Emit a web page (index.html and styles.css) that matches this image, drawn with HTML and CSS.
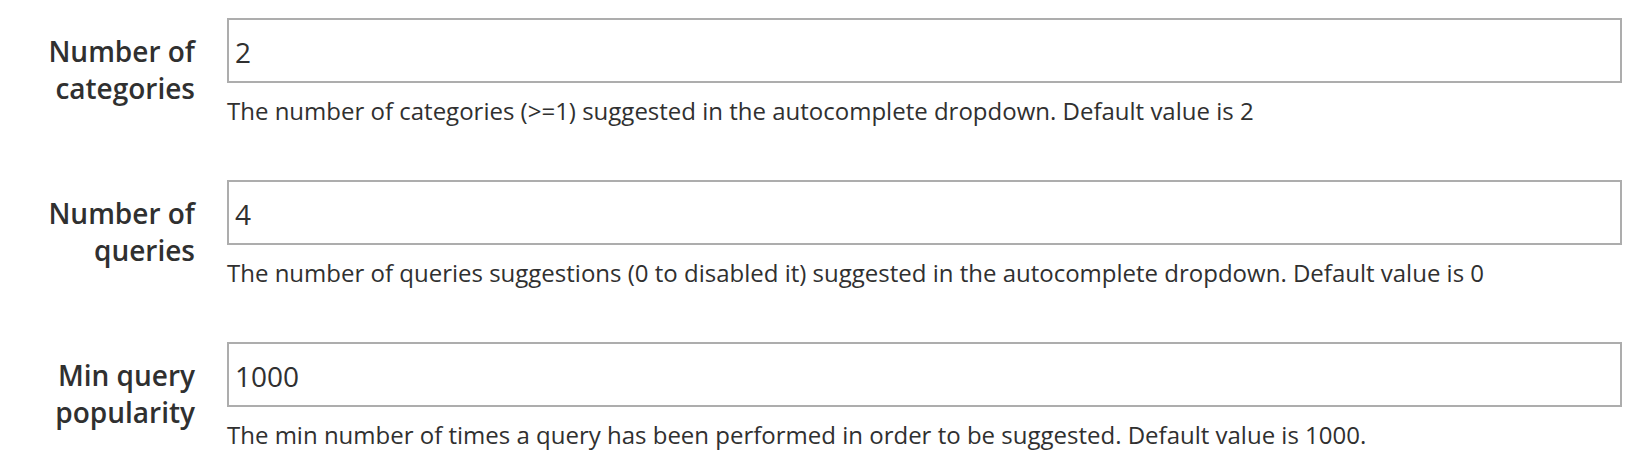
FILE: index.html
```html
<!DOCTYPE html>
<html lang="en">
<head>
    <meta charset="UTF-8">
    <meta name="viewport" content="width=device-width, initial-scale=1.0">
    <title>Autocomplete settings</title>
    <link rel="stylesheet" href="styles.css">
</head>
<body>
    <form class="config-form">
        <div class="field">
            <label class="field-label" for="categories">Number of categories</label>
            <div class="field-control">
                <input class="input-text" type="text" id="categories" value="2">
                <p class="field-note">The number of categories (&gt;=1) suggested in the autocomplete dropdown. Default value is 2</p>
            </div>
        </div>
        <div class="field">
            <label class="field-label" for="queries">Number of queries</label>
            <div class="field-control">
                <input class="input-text" type="text" id="queries" value="4">
                <p class="field-note">The number of queries suggestions (0 to disabled it) suggested in the autocomplete dropdown. Default value is 0</p>
            </div>
        </div>
        <div class="field">
            <label class="field-label" for="popularity">Min query popularity</label>
            <div class="field-control">
                <input class="input-text" type="text" id="popularity" value="1000">
                <p class="field-note">The min number of times a query has been performed in order to be suggested. Default value is 1000.</p>
            </div>
        </div>
    </form>
</body>
</html>
```

FILE: styles.css
```css
body {
    margin: 0;
    background: #ffffff;
    color: #303030;
    font-family: "Open Sans", "Liberation Sans", sans-serif;
}

.config-form {
    padding: 18px 18px 0 0;
}

.field {
    display: flex;
    margin-bottom: 53px;
}

.field-label {
    flex: 0 0 195px;
    padding: 15px 32px 0 0;
    text-align: right;
    font-size: 28px;
    font-weight: 600;
    line-height: 37px;
}

.field-control {
    flex: 1;
}

.input-text {
    display: block;
    box-sizing: border-box;
    width: 100%;
    height: 65px;
    margin: 0;
    padding: 2px 6px 0;
    border: 2px solid #adadad;
    border-radius: 0;
    background: #fff;
    color: #303030;
    font-family: inherit;
    font-size: 28px;
    outline: none;
}

.field-note {
    margin: 12px 0 0;
    font-size: 24px;
    line-height: 32px;
}
```
